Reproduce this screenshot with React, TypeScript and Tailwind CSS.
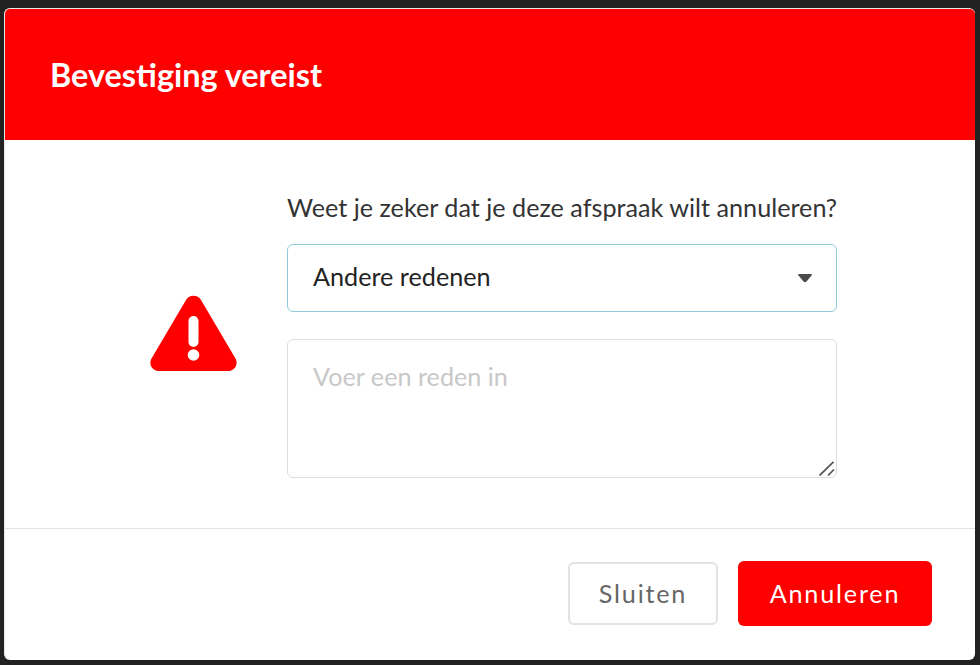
import React from "react";

const lato = { fontFamily: '"Lato", sans-serif' };

const WarningIcon = () => (
  <svg width="88" height="77" viewBox="0.5 0 88 77" className="block">
    <path
      d="M36.5 5 C39.8 -0.6 48.2 -0.6 51.5 5 L86 63.5 C89.2 69.2 85.2 76 78.6 76 L9.4 76 C2.8 76 -1.2 69.2 2 63.5 Z"
      fill="#ff0000"
    />
    <rect x="39" y="21" width="10" height="31" rx="5" fill="#fff" />
    <circle cx="44" cy="60" r="5.8" fill="#fff" />
  </svg>
);

const App = () => {
  return (
    <div className="w-[980px] h-[665px] bg-[#222222] pt-2 pl-1 pr-1 overflow-hidden font-['Lato',sans-serif] antialiased [text-rendering:optimizeLegibility]">
      <div className="w-[971px] h-[652px] bg-white rounded-[6px] overflow-hidden flex flex-col border-t border-l border-[#e8e8e8]">
        <div className="h-[131px] bg-[#ff0000] flex items-center pl-[45px] pt-0.5 shrink-0">
          <h1 className="text-[32.4px] font-bold text-white leading-none [font-variant-ligatures:common-ligatures]">
            Bevestiging vereist
          </h1>
        </div>

        <div className="flex flex-1">
          <div className="w-[282px] shrink-0 flex justify-end pr-[49px] pt-[155px]">
            <WarningIcon />
          </div>
          <div className="w-[550px] pt-[50px]">
            <p className="text-[25.2px] leading-[34px] text-[#333333] whitespace-nowrap">
              Weet je zeker dat je deze afspraak wilt annuleren?
            </p>
            <div className="mt-[20px] h-[68px] border border-[#8ecbd9] rounded-[6px] flex items-center justify-between pl-[25px] pr-[24px]">
              <span className="text-[25.2px] leading-[34px] text-[#222222] -mt-1">Andere redenen</span>
              <svg width="14" height="9" viewBox="0 0 14 9">
                <path
                  d="M1 0 H13 Q14.5 0 13.5 1.5 L8.5 7.5 Q7 9 5.5 7.5 L0.5 1.5 Q-0.5 0 1 0 Z"
                  fill="#4a4a4a"
                />
              </svg>
            </div>
            <div className="relative mt-[27px] w-[550px] h-[139px]">
              <textarea
                style={lato}
                placeholder="Voer een reden in"
                className="block w-full h-full resize-none border border-[#dddddd] rounded-[6px] pl-[25px] pt-[18px] text-[25.2px] leading-[36px] placeholder:text-[#c8c8c8] outline-none"
              />
              <svg width="16" height="15" viewBox="0 0 16 15" className="absolute right-[2px] bottom-[2px]">
                <path d="M0.5 14.5 L14.5 0.8 M9 14.5 L15 8.5" stroke="#555555" strokeWidth="1.7" fill="none" />
              </svg>
            </div>
          </div>
        </div>

        <div className="h-[132px] border-t border-[#e3e3e3] flex items-start justify-end pt-[32px] pr-[43px] gap-5 shrink-0">
          <button className="w-[150px] h-[63px] mt-px border-2 border-[#e2e2e2] rounded-[6px] bg-white text-[25.2px] tracking-[1.8px] text-[#666666]">
            Sluiten
          </button>
          <button className="w-[194px] h-[65px] rounded-[6px] bg-[#ff0000] text-[25.2px] tracking-[1.8px] text-white">
            Annuleren
          </button>
        </div>
      </div>
    </div>
  );
};

export default App;
